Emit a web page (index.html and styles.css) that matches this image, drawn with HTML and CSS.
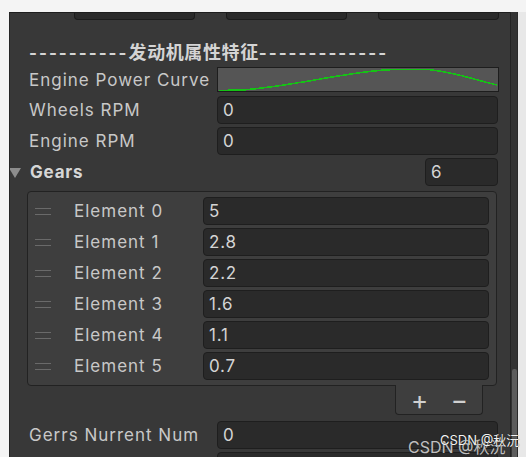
FILE: index.html
```html
<!DOCTYPE html>
<html>
<head>
<meta charset="utf-8">
<link rel="stylesheet" href="styles.css">
</head>
<body>
<div class="page">
  <div class="panel">
    <div class="topbar">
      <div class="tbtn"></div>
      <div class="tbtn"></div>
      <div class="tbtn"></div>
    </div>
    <div class="header"><span class="dash">----------</span><span class="cjk">发动机属性特征</span><span class="dash">-------------</span></div>
    <div class="row curve-row">
      <span class="label">Engine Power Curve</span>
      <div class="curve">
        <svg width="280" height="24" viewBox="0 0 280 24">
          <path d="M1 22.5 L25 22 C 85 17, 135 2, 178 1.5 L 210 1.5 C 237 4, 257 12, 279 17" fill="none" stroke="#16c216" stroke-width="1.6" shape-rendering="crispEdges"/>
        </svg>
      </div>
    </div>
    <div class="row">
      <span class="label">Wheels RPM</span>
      <div class="field">0</div>
    </div>
    <div class="row">
      <span class="label">Engine RPM</span>
      <div class="field">0</div>
    </div>
    <div class="row gears-row">
      <span class="tri"></span>
      <span class="label bold">Gears</span>
      <div class="field size">6</div>
    </div>
    <div class="list">
      <div class="item"><span class="handle"></span><span class="ilabel">Element 0</span><div class="field">5</div></div>
      <div class="item"><span class="handle"></span><span class="ilabel">Element 1</span><div class="field">2.8</div></div>
      <div class="item"><span class="handle"></span><span class="ilabel">Element 2</span><div class="field">2.2</div></div>
      <div class="item"><span class="handle"></span><span class="ilabel">Element 3</span><div class="field">1.6</div></div>
      <div class="item"><span class="handle"></span><span class="ilabel">Element 4</span><div class="field">1.1</div></div>
      <div class="item"><span class="handle"></span><span class="ilabel">Element 5</span><div class="field">0.7</div></div>
    </div>
    <div class="footer-wrap">
      <div class="footer"><span class="plus">+</span><span class="minus">−</span></div>
    </div>
    <div class="row gerrs">
      <span class="label">Gerrs Nurrent Num</span>
      <div class="field">0</div>
    </div>
    <div class="row">
      <span class="label"></span>
      <div class="field"></div>
    </div>
  </div>
  <div class="scroll"><div class="thumb"></div></div>
  <div class="rightgap"></div>
  <div class="wm"><span class="wm1">CSDN @秋沅</span><span class="wm2">CSDN @秋沅</span></div>
</div>
</body>
</html>
```
FILE: styles.css
```css
html, body {
  margin: 0;
  padding: 0;
  background: #f4f4f4;
  width: 526px;
  height: 457px;
  overflow: hidden;
  font-family: Inter, "Noto Sans CJK SC", sans-serif;
}
.page {
  position: relative;
  display: flex;
  padding: 12px 0 0 9px;
  height: 445px;
}
.panel {
  width: 501px;
  background: #383838;
  border-top: 1px solid #1e1e1e;
  border-left: 1px solid #262626;
  padding: 0 12px 0 19px;
  box-sizing: border-box;
  display: flex;
  flex-direction: column;
  overflow: hidden;
}
.topbar {
  display: flex;
  gap: 31px;
  padding-left: 45px;
  height: 6px;
}
.tbtn {
  width: 119px;
  height: 6px;
  background: #2b2b2b;
  border: 1px solid #1c1c1c;
  border-top: none;
  border-radius: 0 0 4px 4px;
  flex: none;
}
.header {
  margin-top: 21px;
  height: 23px;
  line-height: 23px;
  color: #d4d4d4;
  font-weight: 700;
  white-space: nowrap;
}
.dash {
  font-family: Inter, sans-serif;
  font-size: 17px;
  letter-spacing: 2px;
}
.cjk {
  font-family: "Noto Sans CJK SC", sans-serif;
  font-size: 18px;
  letter-spacing: 0.6px;
}
.row {
  display: flex;
  align-items: center;
  height: 28px;
  margin-top: 3px;
}
.curve-row {
  height: 25px;
  margin-top: 4px;
  margin-bottom: 1px;
}
.label {
  width: 188px;
  flex: none;
  color: #c8c8c8;
  font-size: 17px;
  letter-spacing: 1px;
  white-space: nowrap;
}
.bold { font-weight: 700; color: #d6d6d6; letter-spacing: 0.8px; }
.field {
  flex: 1;
  height: 28px;
  box-sizing: border-box;
  background: #2a2a2a;
  border: 1px solid #1e1e1e;
  border-radius: 4px;
  color: #d4d4d4;
  font-size: 17px;
  letter-spacing: 0.8px;
  line-height: 26px;
  padding-left: 5px;
}
.curve {
  flex: 1;
  height: 25px;
  box-sizing: border-box;
  background: #555555;
  border: 1px solid #1d1d1d;
  display: flex;
}
.curve svg { display: block; }
.gears-row { position: relative; }
.tri {
  position: absolute;
  left: -20px;
  top: 10px;
  width: 0;
  height: 0;
  border-left: 6px solid transparent;
  border-right: 6px solid transparent;
  border-top: 10px solid #8d8d8d;
}
.gears-row .label { padding-left: 1px; width: 395px; }
.size { flex: none; width: 73px; margin-left: auto; }
.list {
  margin: 5px 1px 0 -2px;
  background: #3e3e3e;
  border: 1px solid #222222;
  border-radius: 4px;
  padding: 5px 7px 5px 7px;
  display: flex;
  flex-direction: column;
  gap: 3px;
}
.item {
  display: flex;
  align-items: center;
  height: 28px;
}
.handle {
  width: 16px;
  height: 5px;
  border-top: 1px solid #6a6a6a;
  border-bottom: 1px solid #6a6a6a;
  margin-right: 23px;
  flex: none;
}
.ilabel {
  width: 129px;
  flex: none;
  color: #c8c8c8;
  font-size: 17px;
  letter-spacing: 1px;
  white-space: nowrap;
}
.footer-wrap {
  display: flex;
  justify-content: flex-end;
  padding-right: 15px;
}
.footer {
  width: 88px;
  height: 30px;
  box-sizing: border-box;
  background: #3e3e3e;
  border: 1px solid #222222;
  border-top: none;
  border-radius: 0 0 4px 4px;
  margin-top: -1px;
  display: flex;
  align-items: center;
  justify-content: space-between;
  padding: 0 14px 0 15px;
  color: #d0d0d0;
  font-size: 26px;
  line-height: 26px;
}
.gerrs { margin-top: 6px; }
.wm {
  position: absolute;
  left: 408px;
  top: 430px;
  width: 110px;
  height: 26px;
}
.wm1 {
  position: absolute;
  left: 0;
  top: 4px;
  font-size: 16px;
  color: #c0c0c0;
  text-shadow: 0 0 1px #222;
  white-space: nowrap;
}
.wm2 {
  position: absolute;
  left: 32px;
  top: 0;
  font-size: 13px;
  color: #f2f2f2;
  text-shadow: 0 0 1px #000;
  white-space: nowrap;
}
.scroll {
  width: 6px;
  background: #333333;
  border-left: 1px solid #232323;
  border-right: 1px solid #2a2a2a;
  position: relative;
  flex: none;
}
.thumb {
  position: absolute;
  left: 1px;
  right: 0;
  top: 357px;
  bottom: 0;
  background: #5c5c5c;
  border-radius: 2px 2px 0 0;
}
.rightgap {
  flex: 1;
  background: #e8e8e8;
}
```
